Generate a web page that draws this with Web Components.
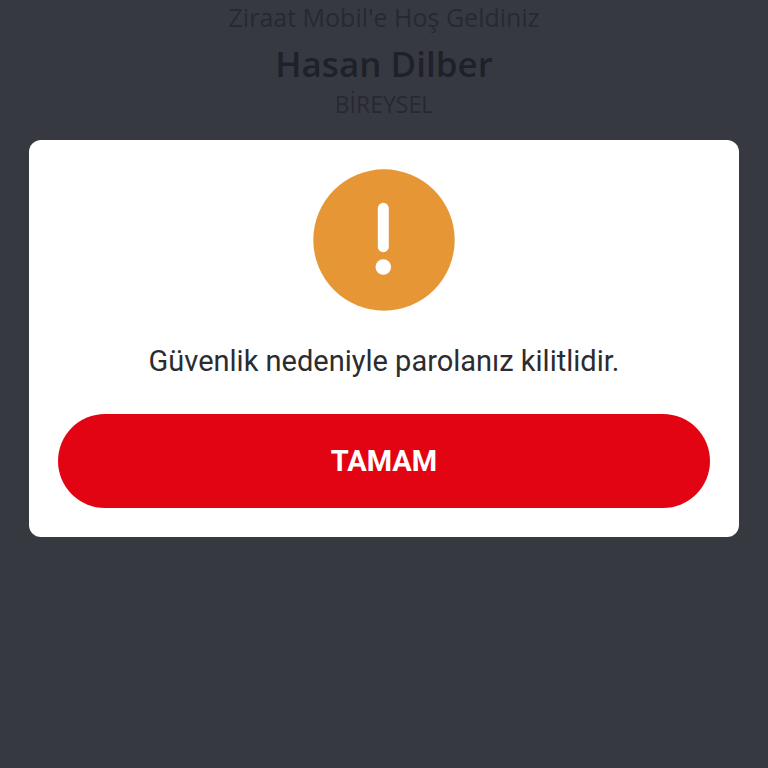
<!DOCTYPE html>
<html lang="tr">
<head>
  <meta charset="UTF-8">
  <meta name="viewport" content="width=device-width, initial-scale=1">
  <title>Ziraat Mobil</title>
  <style>
    body {
      margin: 0;
      min-height: 100vh;
      background: #373941;
      font-family: Roboto, "Noto Sans", sans-serif;
    }
  </style>
</head>
<body>
  <welcome-header name="Hasan Dilber" segment="BİREYSEL">Ziraat Mobil'e Hoş Geldiniz</welcome-header>
  <alert-dialog>
    <warning-icon slot="icon"></warning-icon>
    Güvenlik nedeniyle parolanız kilitlidir.
    <pill-button slot="action">TAMAM</pill-button>
  </alert-dialog>

  <script>
    /**
     * @name WelcomeHeader
     * @description greeting, customer name and segment at the top of the login page
     * @param {string} name - customer name
     * @param {string} segment - customer segment, shown under the name
     */
    class WelcomeHeader extends HTMLElement {
      constructor() {
        super();

        this.shadow = this.attachShadow({ mode: 'open' });
        this.shadow.innerHTML = `
          <style>
            :host {
              display: block;
              color: #272931;
              font-family: "Open Sans", sans-serif;
              text-align: center;
            }

            p, h1 {
              margin: 0;
            }

            .greeting {
              font-size: 25px;
              line-height: 34px;
            }

            .name {
              padding: 6px 0 4px;
              color: #1f212a;
              font-size: 35px;
              font-weight: 600;
              line-height: 48px;
            }

            .segment {
              font-size: 23px;
              line-height: 24px;
            }
          </style>
          <p class="greeting"><slot></slot></p>
          <h1 class="name"></h1>
          <p class="segment"></p>
        `;
      }

      connectedCallback() {
        this.shadow.querySelector('.name').textContent = this.getAttribute('name');
        this.shadow.querySelector('.segment').textContent = this.getAttribute('segment');
      }
    }

    /**
     * @name WarningIcon
     * @description orange disc with an exclamation mark
     */
    class WarningIcon extends HTMLElement {
      constructor() {
        super();

        this.shadow = this.attachShadow({ mode: 'open' });
        this.shadow.innerHTML = `
          <style>
            :host {
              display: block;
              width: 142px;
              height: 142px;
            }

            svg {
              display: block;
              width: 100%;
              height: 100%;
            }
          </style>
          <svg viewBox="0 0 142 142" aria-hidden="true">
            <circle cx="71" cy="71" r="70.7" fill="#e69635"/>
            <path d="M70.3 39.3v38.4" stroke="#fff" stroke-width="11" stroke-linecap="round"/>
            <circle cx="70.3" cy="98" r="7.8" fill="#fff"/>
          </svg>
        `;
      }
    }

    /**
     * @name PillButton
     * @description full width rounded button
     */
    class PillButton extends HTMLElement {
      constructor() {
        super();

        this.shadow = this.attachShadow({ mode: 'open' });
        this.shadow.innerHTML = `
          <style>
            :host {
              display: block;
            }

            button {
              display: block;
              width: 100%;
              padding: 29px;
              border: 0;
              border-radius: 48px;
              background: #e20412;
              color: #fff;
              cursor: pointer;
              font-family: inherit;
              font-size: 29px;
              font-weight: 700;
              line-height: 36px;
            }
          </style>
          <button type="button"><slot></slot></button>
        `;
      }
    }

    /**
     * @name AlertDialog
     * @description white card over the page, with slots for an icon, a message and an action
     */
    class AlertDialog extends HTMLElement {
      constructor() {
        super();

        this.shadow = this.attachShadow({ mode: 'open' });
        this.shadow.innerHTML = `
          <style>
            :host {
              position: fixed;
              inset: 0;
              box-sizing: border-box;
              padding: 140px 29px 29px;
              overflow: auto;
            }

            .card {
              display: flex;
              flex-direction: column;
              padding: 29px;
              border-radius: 12px;
              background: #fff;
            }

            slot[name="icon"]::slotted(*) {
              align-self: center;
            }

            .message {
              margin: 0;
              padding: 32px 0 35px;
              color: #2b2c30;
              font-size: 29px;
              line-height: 36px;
              text-align: center;
            }
          </style>
          <div class="card" role="alertdialog" aria-modal="true" aria-labelledby="message">
            <slot name="icon"></slot>
            <p class="message" id="message"><slot></slot></p>
            <slot name="action"></slot>
          </div>
        `;
      }
    }

    // register components
    customElements.define('welcome-header', WelcomeHeader);
    customElements.define('warning-icon', WarningIcon);
    customElements.define('pill-button', PillButton);
    customElements.define('alert-dialog', AlertDialog);
  </script>
</body>
</html>
